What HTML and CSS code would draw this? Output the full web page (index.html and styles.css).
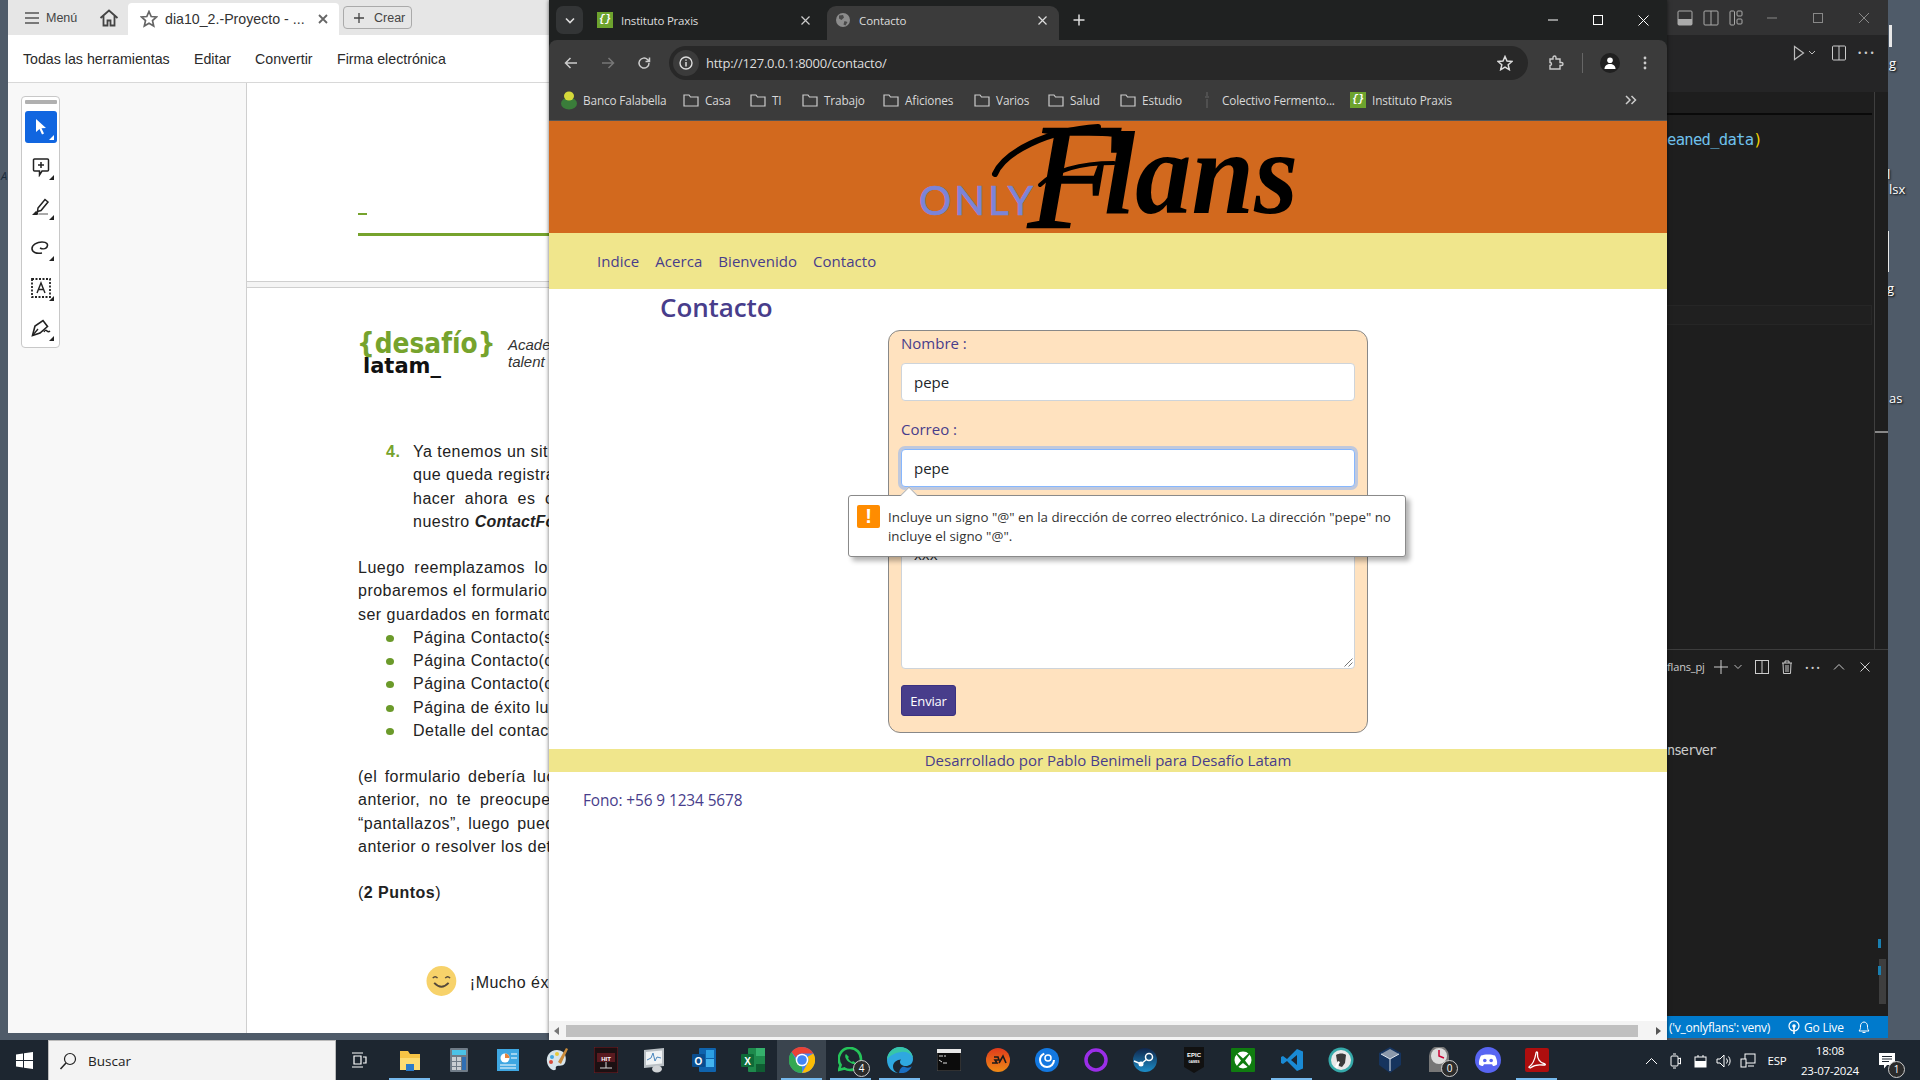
FILE: index.html
```html
<!DOCTYPE html>
<html lang="es">
<head>
<meta charset="utf-8">
<title>Contacto</title>
<link rel="stylesheet" href="styles.css">
</head>
<body>
<div class="screen">
  <div class="desktop">
    <span class="dlabel dl1">g</span>
    <span class="dlabel dl2">l</span>
    <span class="dlabel dl3">lsx</span>
    <span class="dlabel dl4">g</span>
    <span class="dlabel dl5">as</span>
    <span class="dlabel dl6">A</span>
    <i class="dbar dbar1"></i>
    <i class="dbar dbar2"></i>

    <!-- Acrobat window -->
    <section class="win acro">
      <div class="acro-tabs">
        <svg class="a-menu" width="16" height="14" viewBox="0 0 16 14"><path d="M1 2h14M1 7h14M1 12h14" stroke="#555" stroke-width="1.6"/></svg>
        <span class="a-menutxt">Menú</span>
        <svg class="a-home" width="20" height="18" viewBox="0 0 20 18"><path d="M1.5 9 10 1.5 18.500 9M4.500 7v9.500h4v-5h3v5h4V7" fill="none" stroke="#444" stroke-width="1.8"/></svg>
        <div class="a-tab">
          <svg width="18" height="18" viewBox="0 0 18 18"><path d="M9 1.500 11.200 6.500 16.500 7 12.500 10.600 13.700 16 9 13.200 4.300 16 5.500 10.600 1.500 7 6.800 6.500Z" fill="none" stroke="#666" stroke-width="1.700"/></svg>
          <span class="a-title">dia10_2.-Proyecto - ...</span>
          <svg width="10" height="10" viewBox="0 0 10 10"><path d="M1 1l8 8M9 1l-8 8" stroke="#666" stroke-width="1.800"/></svg>
        </div>
        <div class="a-crear">
          <svg width="12" height="12" viewBox="0 0 12 12"><path d="M6 1v10M1 6h10" stroke="#444" stroke-width="1.300"/></svg>
          <span>Crear</span>
        </div>
      </div>
      <div class="acro-menu">
        <span>Todas las herramientas</span><span>Editar</span><span>Convertir</span><span>Firma electrónica</span>
      </div>
      <div class="acro-body">
        <aside class="acro-side">
          <div class="palette">
            <i class="grip"></i>
            <div class="tool sel"><svg width="14" height="18" viewBox="0 0 14 18"><path d="M2 1v13l3.500-3 2.500 5.500 2-1-2.500-5.200 4.500-.3Z" fill="#fff"/></svg><b class="corner wh"></b></div>
            <div class="tool"><svg width="18" height="20" viewBox="0 0 18 20"><path d="M2.500 2h13a1 1 0 0 1 1 1v10a1 1 0 0 1-1 1H10l-2.500 4V14h-5a1 1 0 0 1-1-1V3a1 1 0 0 1 1-1Z" fill="none" stroke="#222" stroke-width="1.500"/><path d="M9 5v6M6 8h6" stroke="#222" stroke-width="1.500"/></svg><b class="corner"></b></div>
            <div class="tool"><svg width="20" height="20" viewBox="0 0 20 20"><path d="M7 11 14 2.500l3 2.500-7 8.500-3.500 1Z" fill="none" stroke="#222" stroke-width="1.500"/><path d="M1 18l4-4 2.500 1.800-1 2.200Z" fill="#222"/><path d="M8 16h9v2H7Z" fill="#aaa"/></svg><b class="corner"></b></div>
            <div class="tool"><svg width="20" height="14" viewBox="0 0 20 14"><path d="M11 12C5 13 1 11 1 7.500S6 1 11 1s6.500 2.500 5 5-5 2-7 1" fill="none" stroke="#222" stroke-width="1.600"/></svg><b class="corner"></b></div>
            <div class="tool"><svg width="20" height="20" viewBox="0 0 20 20"><rect x="1" y="1" width="18" height="18" fill="none" stroke="#222" stroke-width="1.800" stroke-dasharray="2 1.500"/><path d="M6 15 10 5l4 10M7.500 11.500h5" fill="none" stroke="#222" stroke-width="1.400"/></svg><b class="corner"></b></div>
            <div class="tool"><svg width="20" height="18" viewBox="0 0 20 18"><path d="M1.500 16.500 4 7l8-5.500 4.500 6L9 14Z" fill="none" stroke="#222" stroke-width="1.600"/><path d="M1.500 16.500 7 10" stroke="#222" stroke-width="1.300"/><path d="M13 13c1-2 2-2 3-1s2 1 3 0" fill="none" stroke="#222" stroke-width="1.500"/></svg><b class="corner"></b></div>
          </div>
        </aside>
        <div class="acro-doc">
          <div class="page page1"><i class="dash"></i><i class="rule"></i></div>
          <div class="page page2">
            <div class="doc-head">
              <div class="brand"><span class="brand-a">{desafío}</span><span class="brand-b">latam_</span></div>
              <div class="tagline"><span>Acade</span><span>talent</span></div>
            </div>
            <ol class="item">
              <li class="ln"><span class="num">4.</span>Ya tenemos un sit</li>
              <li class="ln">que queda registra</li>
              <li class="ln ws5">hacer ahora es c</li>
              <li class="ln">nuestro <b><i>ContactFo</i></b></li>
            </ol>
            <p class="para"><span class="ln ws5">Luego reemplazamos lo</span><span class="ln">probaremos el formulario</span><span class="ln">ser guardados en formato</span></p>
            <ul class="bul">
              <li class="ln">Página Contacto(s</li>
              <li class="ln">Página Contacto(c</li>
              <li class="ln">Página Contacto(c</li>
              <li class="ln">Página de éxito lue</li>
              <li class="ln">Detalle del contact</li>
            </ul>
            <p class="para"><span class="ln ws3">(el formulario debería luc</span><span class="ln ws4">anterior, no te preocupe</span><span class="ln ws3">“pantallazos”, luego pued</span><span class="ln">anterior o resolver los det</span></p>
            <p class="para"><span class="ln">(<b>2 Puntos</b>)</span></p>
            <div class="luck">
              <svg width="32" height="32" viewBox="0 0 32 32"><circle cx="16" cy="16" r="15.500" fill="#f7d26a"/><path d="M7 13q2.500-3 5 0M20 13q2.500-3 5 0" fill="none" stroke="#55493a" stroke-width="1.500"/><path d="M8.500 18q7.500 8 15 0" fill="none" stroke="#55493a" stroke-width="2"/></svg>
              <span>¡Mucho éx</span>
            </div>
          </div>
        </div>
      </div>
    </section>

    <!-- VS Code window -->
    <section class="win code">
      <div class="code-title">
        <svg width="16" height="16" viewBox="0 0 16 16"><rect x="1" y="1" width="14" height="14" rx="1" fill="none" stroke="#aaa"/><rect x="1" y="9" width="14" height="6" fill="#aaa"/></svg>
        <svg width="16" height="16" viewBox="0 0 16 16"><rect x="1" y="1" width="14" height="14" rx="1" fill="none" stroke="#aaa"/><path d="M8 1v14" stroke="#aaa"/></svg>
        <svg width="14" height="16" viewBox="0 0 14 16"><rect x="1" y="1" width="4.500" height="14" rx="1" fill="none" stroke="#aaa"/><rect x="8" y="1" width="5" height="5" rx="1" fill="none" stroke="#aaa"/><rect x="8" y="9" width="5" height="5" rx="1" fill="none" stroke="#aaa"/></svg>
        <span class="wbtn w1"><svg width="12" height="12" viewBox="0 0 12 12"><path d="M1 6h10" stroke="#888"/></svg></span>
        <span class="wbtn"><svg width="12" height="12" viewBox="0 0 12 12"><rect x="1.500" y="1.500" width="9" height="9" fill="none" stroke="#888"/></svg></span>
        <span class="wbtn"><svg width="12" height="12" viewBox="0 0 12 12"><path d="M1 1l10 10M11 1 1 11" stroke="#888"/></svg></span>
      </div>
      <div class="code-tool">
        <svg width="12" height="16" viewBox="0 0 12 16"><path d="M1.500 1.500v13l9-6.500Z" fill="none" stroke="#bbb" stroke-width="1.200"/></svg>
        <svg width="8" height="6" viewBox="0 0 8 6"><path d="M1 1l3 3 3-3" fill="none" stroke="#bbb"/></svg>
        <svg class="ct-split" width="14" height="16" viewBox="0 0 14 16"><rect x=".5" y="1" width="13" height="14" rx="1" fill="none" stroke="#ccc"/><path d="M7 1v14" stroke="#ccc"/></svg>
        <span class="ct-dots">···</span>
      </div>
      <div class="code-gap"></div>
      <div class="code-edit">
        <div class="edit-main">
          <i class="edit-shadow"></i>
          <div class="code-line"><span class="c-var">eaned_data</span><span class="c-par">)</span></div>
          <div class="edit-band"></div>
          <div class="edit-rest"></div>
        </div>
        <div class="edit-map"><i class="map-slider"></i></div>
      </div>
      <div class="term">
        <div class="term-head">
          <span class="term-name">flans_pj</span>
          <svg width="16" height="16" viewBox="0 0 16 16"><path d="M8 1v14M1 8h14" stroke="#ccc"/></svg>
          <svg width="8" height="6" viewBox="0 0 8 6"><path d="M.5 1l3.500 3.500L7.500 1" fill="none" stroke="#bbb"/></svg>
          <svg width="14" height="14" viewBox="0 0 14 14"><rect x=".5" y=".5" width="13" height="13" fill="none" stroke="#ccc"/><path d="M7 0v14" stroke="#ccc"/></svg>
          <svg width="12" height="14" viewBox="0 0 12 14"><path d="M1 3h10M4 3V1h4v2M2 3l.5 10.500h7L10 3M5 5v7M7 5v7" fill="none" stroke="#ccc"/></svg>
          <span class="th-dots">···</span>
          <svg width="12" height="8" viewBox="0 0 12 8"><path d="M1 6.500 6 1.500l5 5" fill="none" stroke="#ccc"/></svg>
          <svg width="10" height="10" viewBox="0 0 10 10"><path d="M.5.500l9 9M9.500.500l-9 9" stroke="#ccc"/></svg>
        </div>
        <div class="term-body">
          <div class="term-line">nserver</div>
          <i class="tb-mark m1"></i><i class="tb-thumb"></i><i class="tb-mark m2"></i>
        </div>
      </div>
      <div class="status">
        <span class="st-env">('v_onlyflans': venv)</span>
        <svg width="12" height="14" viewBox="0 0 12 14"><circle cx="6" cy="6" r="5" fill="none" stroke="#fff" stroke-width="1.200"/><circle cx="6" cy="6" r="1.800" fill="#fff"/><path d="M6 7v7" stroke="#fff" stroke-width="1.600"/></svg>
        <span class="st-live">Go Live</span>
        <svg class="st-bell" width="12" height="14" viewBox="0 0 12 14"><path d="M1 11h10c-1.500-1.500-1.500-3-1.500-5S8 2 6 2 2.500 4 2.500 6 2.500 9.500 1 11ZM4.500 12.500h3" fill="none" stroke="#fff"/></svg>
      </div>
    </section>

    <!-- Chrome window -->
    <section class="win chrome">
      <div class="strip">
        <div class="tablist"><svg width="10" height="7" viewBox="0 0 10 7"><path d="M1 1.500 5 5.500 9 1.500" fill="none" stroke="#ddd" stroke-width="1.600"/></svg></div>
        <div class="ctab">
          <span class="fav-praxis"><em>{}</em></span>
          <span class="ctab-t">Instituto Praxis</span>
          <svg width="9" height="9" viewBox="0 0 9 9"><path d="M.5.500l8 8M8.500.500l-8 8" stroke="#ccc" stroke-width="1.200"/></svg>
        </div>
        <div class="ctab active">
          <svg class="globe" width="14" height="14" viewBox="0 0 14 14"><circle cx="7" cy="7" r="7" fill="#8c8c8c"/><path d="M3 2.500 7 2 8 4.500 5.500 7 3 5.500ZM8.500 8l3 1-2 3.500-2-1Z" fill="#4a4a4a"/></svg>
          <span class="ctab-t">Contacto</span>
          <svg width="9" height="9" viewBox="0 0 9 9"><path d="M.5.500l8 8M8.500.500l-8 8" stroke="#ddd" stroke-width="1.200"/></svg>
        </div>
        <svg class="newtab" width="12" height="12" viewBox="0 0 12 12"><path d="M6 .500v11M.5 6h11" stroke="#ddd" stroke-width="1.500"/></svg>
        <div class="cwin">
          <svg width="10" height="10" viewBox="0 0 10 10"><path d="M0 5h10" stroke="#fff"/></svg>
          <svg width="10" height="10" viewBox="0 0 10 10"><rect x=".5" y=".5" width="9" height="9" fill="none" stroke="#fff"/></svg>
          <svg width="11" height="11" viewBox="0 0 11 11"><path d="M.5.500l10 10M10.500.500l-10 10" stroke="#fff"/></svg>
        </div>
      </div>
      <div class="ctool">
        <div class="navbtns">
          <svg width="14" height="12" viewBox="0 0 14 12"><path d="M13 6H2M6.500 1 1.500 6l5 5" fill="none" stroke="#ccc" stroke-width="1.500"/></svg>
          <svg width="14" height="12" viewBox="0 0 14 12"><path d="M1 6h11M7.500 1l5 5-5 5" fill="none" stroke="#777" stroke-width="1.500"/></svg>
          <svg width="14" height="14" viewBox="0 0 14 14"><path d="M12 7a5 5 0 1 1-1.500-3.500L12.500 5.500M12.500 1.500v4h-4" fill="none" stroke="#ccc" stroke-width="1.500"/></svg>
        </div>
        <div class="omni">
          <span class="omni-i"><svg width="14" height="14" viewBox="0 0 14 14"><circle cx="7" cy="7" r="6" fill="none" stroke="#ddd" stroke-width="1.400"/><path d="M7 6v4.500M7 3.500v1.300" stroke="#ddd" stroke-width="1.500"/></svg></span>
          <span class="omni-u">http://127.0.0.1:8000/contacto/</span>
          <svg class="omni-s" width="16" height="16" viewBox="0 0 16 16"><path d="M8 1.500 10 6 15 6.500 11.200 9.800 12.300 14.700 8 12.200 3.700 14.700 4.800 9.800 1 6.500 6 6Z" fill="none" stroke="#ddd" stroke-width="1.500"/></svg>
        </div>
        <div class="ctool-r">
          <svg width="16" height="16" viewBox="0 0 16 16"><path d="M2 4h3V2.500a1.500 1.500 0 0 1 3 0V4h4v3.500h1.500a1.500 1.500 0 0 1 0 3H12V14H2v-3.500a1.500 1.500 0 0 0 0-3Z" fill="none" stroke="#ccc" stroke-width="1.400"/></svg>
          <i class="csep"></i>
          <span class="avatar"><svg width="12" height="12" viewBox="0 0 12 12"><circle cx="6" cy="3.300" r="2.800" fill="#fff"/><path d="M.5 12c0-3.500 2.500-5 5.500-5s5.500 1.500 5.500 5Z" fill="#fff"/></svg></span>
          <svg width="4" height="14" viewBox="0 0 4 14"><circle cx="2" cy="2" r="1.400" fill="#ccc"/><circle cx="2" cy="7" r="1.400" fill="#ccc"/><circle cx="2" cy="12" r="1.400" fill="#ccc"/></svg>
        </div>
      </div>
      <div class="bmarks">
        <span class="bm"><svg width="16" height="20" viewBox="0 0 16 20"><ellipse cx="8" cy="13.500" rx="8" ry="6" fill="#3a7d3a"/><ellipse cx="8" cy="6" rx="5" ry="4.500" fill="#d4d83a"/></svg>Banco Falabella</span>
        <span class="bm"><svg class="fold" viewBox="0 0 16 14"><path d="M1 2h5l1.500 2H15v9H1Z"/></svg>Casa</span>
        <span class="bm"><svg class="fold" viewBox="0 0 16 14"><path d="M1 2h5l1.500 2H15v9H1Z"/></svg>TI</span>
        <span class="bm"><svg class="fold" viewBox="0 0 16 14"><path d="M1 2h5l1.500 2H15v9H1Z"/></svg>Trabajo</span>
        <span class="bm"><svg class="fold" viewBox="0 0 16 14"><path d="M1 2h5l1.500 2H15v9H1Z"/></svg>Aficiones</span>
        <span class="bm"><svg class="fold" viewBox="0 0 16 14"><path d="M1 2h5l1.500 2H15v9H1Z"/></svg>Varios</span>
        <span class="bm"><svg class="fold" viewBox="0 0 16 14"><path d="M1 2h5l1.500 2H15v9H1Z"/></svg>Salud</span>
        <span class="bm"><svg class="fold" viewBox="0 0 16 14"><path d="M1 2h5l1.500 2H15v9H1Z"/></svg>Estudio</span>
        <span class="bm bm-col"><svg width="6" height="18" viewBox="0 0 6 18"><path d="M3 1v4M1 6h4M2 9h2M3 10v7" stroke="#666" stroke-width="1"/></svg>Colectivo Fermento...</span>
        <span class="bm"><span class="fav-praxis"><em>{}</em></span>Instituto Praxis</span>
        <svg class="bm-more" width="12" height="10" viewBox="0 0 12 10"><path d="M1 1l4 4-4 4M6.500 1l4 4-4 4" fill="none" stroke="#ccc" stroke-width="1.500"/></svg>
      </div>
      <div class="site">
        <header class="s-head">
          <svg width="400" height="112" viewBox="0 0 400 112" role="img" aria-label="Only Flans">
            <text class="l-only" x="11" y="94" textLength="117" lengthAdjust="spacingAndGlyphs">ONLY</text>
            <path class="l-swash" d="M87 53C96 32 138 9 190 6"/>
            <path class="l-swash2" d="M132 64C150 46 180 42 206 42"/>
            <text class="l-f" x="120" y="106">F</text>
            <text class="l-ans" x="196" y="92" textLength="194" lengthAdjust="spacingAndGlyphs">lans</text>
          </svg>
        </header>
        <nav class="s-nav"><a>Indice</a><a>Acerca</a><a>Bienvenido</a><a>Contacto</a></nav>
        <main class="s-main">
          <h2>Contacto</h2>
          <form class="card">
            <label>Nombre :</label>
            <div class="inp">pepe</div>
            <label>Correo :</label>
            <div class="inp focus">pepe</div>
            <label class="hid"></label>
            <div class="area">xxx
              <svg class="grabber" width="10" height="10" viewBox="0 0 10 10"><path d="M9.500 1.500 1.500 9.500M9.500 5.500l-4 4" stroke="#777"/></svg>
            </div>
            <button type="button" class="send">Enviar</button>
          </form>
          <div class="bubble">
            <i class="arrow"></i>
            <span class="warn">!</span>
            <p>Incluye un signo "@" en la dirección de correo electrónico. La dirección "pepe" no incluye el signo "@".</p>
          </div>
        </main>
        <footer class="s-foot">Desarrollado por Pablo Benimeli para Desafío Latam</footer>
        <div class="s-fono">Fono: +56 9 1234 5678</div>
      </div>
      <div class="hbar">
        <svg width="6" height="8" viewBox="0 0 6 8"><path d="M5 0v8L0 4Z" fill="#777"/></svg>
        <i class="hthumb"></i>
        <svg class="harrow" width="6" height="8" viewBox="0 0 6 8"><path d="M1 0v8l5-4Z" fill="#555"/></svg>
      </div>
    </section>
  </div>

  <!-- Taskbar -->
  <footer class="taskbar">
    <div class="t-start"><svg width="17" height="17" viewBox="0 0 17 17"><path d="M0 2.500 7 1.500v6.500H0ZM8 1.300 17 0v8H8ZM0 9h7v6.500L0 14.500ZM8 9h9v8L8 15.700Z" fill="#fff"/></svg></div>
    <div class="t-search">
      <svg width="18" height="18" viewBox="0 0 18 18"><circle cx="11" cy="7" r="5.500" fill="none" stroke="#222" stroke-width="1.200"/><path d="M7 11 1.500 17" stroke="#222" stroke-width="1.500"/></svg>
      <span>Buscar</span>
    </div>
    <div class="t-view"><svg width="16" height="16" viewBox="0 0 16 16"><path d="M1 1h11M1 15h11M3 4h7v8H3ZM12 5h3v6h-3" fill="none" stroke="#fff" stroke-width="1.200"/></svg></div>
    <div class="t-item on"><svg width="24" height="24" viewBox="0 0 24 24"><path d="M2 3h8l2 3h10v16H2Z" fill="#f6c445"/><path d="M2 10h20v12H2Z" fill="#fcdc72"/><path d="M8 23v-7h8v7Z" fill="#2b7bc9"/></svg></div>
    <div class="t-item"><svg width="18" height="24" viewBox="0 0 18 24"><rect width="18" height="24" rx="1" fill="#6f7b87"/><rect x="2" y="2" width="14" height="5" fill="#4bc3e8"/><path d="M2 9h4v4H2ZM7 9h4v4H7ZM2 14h4v4H2ZM7 14h4v4H7ZM2 19h4v3H2ZM7 19h4v3H7Z" fill="#c9ced3"/><path d="M12 9h4v13h-4Z" fill="#2f6fb5"/></svg></div>
    <div class="t-item"><svg width="22" height="22" viewBox="0 0 22 22"><rect width="22" height="22" fill="#3fa7e2"/><circle cx="8" cy="9" r="4.500" fill="#fff"/><path d="M8 9V4.500a4.500 4.500 0 0 1 4.500 4.500Z" fill="#e8843a"/><path d="M14 5h6M14 9h6M3 16h16M3 19h16" stroke="#fff"/></svg></div>
    <div class="t-item"><svg width="24" height="26" viewBox="0 0 24 26"><path d="M12 3C5 3 1 9 2 15c.8 5 5 9 8 8 2-.7-.5-3 2-4s6 1 8-3 1-13-8-13Z" fill="#d8e4ea"/><circle cx="7" cy="10" r="2" fill="#3fa7e2"/><circle cx="12" cy="7" r="2" fill="#e8c93a"/><circle cx="6" cy="15" r="2" fill="#d84a3a"/><path d="M13 15 21 1l2 1-7 15Z" fill="#c98a3a"/></svg></div>
    <div class="t-item"><svg width="24" height="26" viewBox="0 0 24 26"><rect width="24" height="26" rx="1" fill="#1c1012" stroke="#7a1d25"/><rect x="3" y="6" width="18" height="9" fill="#5a1a20"/><text x="12" y="13.500" class="mini">HIT</text><path d="M12 15v6M6 21h12" stroke="#d8d8d8" stroke-width="1"/></svg></div>
    <div class="t-item"><svg width="24" height="26" viewBox="0 0 24 26"><path d="M1 3 21 1v18L1 21Z" fill="#b9bfc4"/><path d="M3 5 19 3.500v13L3 18Z" fill="#f0f3f5"/><path d="M4 13 8 11l2-5 2 8 2-4 4 1" fill="none" stroke="#4a86bd"/><ellipse cx="14" cy="22" rx="5" ry="3.500" fill="#d0d3d6"/></svg></div>
    <div class="t-item"><svg width="24" height="24" viewBox="0 0 24 24"><rect x="7" y="0" width="17" height="24" rx="1" fill="#0f63ad"/><rect x="14" y="2" width="8" height="8" fill="#2c9fe2"/><rect x="14" y="11" width="8" height="8" fill="#43b4ef"/><rect x="0" y="6" width="13" height="13" rx="1" fill="#0a4d8e"/><text x="6.500" y="16.500" class="mini big">O</text></svg></div>
    <div class="t-item"><svg width="24" height="24" viewBox="0 0 24 24"><rect x="7" y="0" width="17" height="24" rx="1" fill="#1e8a4c"/><rect x="15" y="0" width="9" height="8" fill="#35b06c"/><rect x="15" y="16" width="9" height="8" fill="#0f5d32"/><rect x="0" y="6" width="13" height="13" rx="1" fill="#0f6a38"/><text x="6.500" y="16.500" class="mini big">X</text></svg></div>
    <div class="t-item sel on"><svg width="26" height="26" viewBox="0 0 26 26"><circle cx="13" cy="13" r="13" fill="#4285f4"/><path d="M13 0a13 13 0 0 1 11.300 6.500H13a6.500 6.500 0 0 0-6 4L2.500 5A13 13 0 0 1 13 0Z" fill="#ea4335"/><path d="M24.300 6.500A13 13 0 0 1 13 26l5.600-9.700a6.500 6.500 0 0 0 0-6.500Z" fill="#fbbc05"/><path d="M13 26A13 13 0 0 1 2.500 5L8 14.500a6.500 6.500 0 0 0 5 5Z" fill="#34a853"/><circle cx="13" cy="13" r="6.300" fill="#fff"/><circle cx="13" cy="13" r="4.800" fill="#4285f4"/></svg></div>
    <div class="t-item on"><svg width="26" height="26" viewBox="0 0 26 26"><path d="M12 1a11 11 0 0 1 11 11c0 6-5 11-11 11-2 0-4-.6-5.500-1.500L1 23l1.600-5A11 11 0 0 1 12 1Z" fill="none" stroke="#25c45a" stroke-width="2.600"/><path d="M8 7c-2 2 0 6 3 8s6 3 7 1l-3-2-1 1c-2-.8-3-2-4-4l1-1Z" fill="#25c45a"/></svg><b class="t-badge">4</b></div>
    <div class="t-item on"><svg width="26" height="26" viewBox="0 0 26 26"><path d="M13 0c7 0 13 5 13 12 0 5-4 7-7 7-4 0-6-2-6-4 0-1 .5-2 1-2.500-4 0-8 3-8 7 0 3 2 6 6 6.500C5 26 0 20 0 13 0 6 6 0 13 0Z" fill="#2fa8e0"/><path d="M0 13C0 6 6 0 13 0c7 0 13 5 13 12-1-5-6-8-12-7-7 1-12 4-14 8Z" fill="#37c6a8"/><path d="M12 26c6 1 11-2 13-7-2 2-5 2-7 1s-5 0-6 6Z" fill="#1a6ec2"/></svg></div>
    <div class="t-item"><svg width="24" height="22" viewBox="0 0 24 22"><rect width="24" height="22" fill="#0c0c0c" stroke="#555"/><rect width="24" height="4" fill="#e8e8e8"/><path d="M2 7h4M7 7h2M2 11l3 2M6 14h4" stroke="#ddd"/></svg></div>
    <div class="t-item"><svg width="24" height="26" viewBox="0 0 24 26"><defs><linearGradient id="eag" x1="0" y1="0" x2="0" y2="1"><stop offset="0" stop-color="#e03a1c"/><stop offset="1" stop-color="#ee8a16"/></linearGradient></defs><circle cx="12" cy="13" r="12" fill="url(#eag)"/><path d="M6 16h5l-2-3h4l-1-3H8M13 16l4-7 3 7" fill="none" stroke="#1a1a1a" stroke-width="1.600"/></svg></div>
    <div class="t-item"><svg width="24" height="26" viewBox="0 0 24 26"><circle cx="12" cy="13" r="12" fill="#1378e0"/><circle cx="12" cy="13" r="7" fill="none" stroke="#fff" stroke-width="2" stroke-dasharray="30 14"/><circle cx="13" cy="11" r="3" fill="none" stroke="#fff" stroke-width="1.500"/></svg></div>
    <div class="t-item"><svg width="24" height="24" viewBox="0 0 24 24"><circle cx="12" cy="12" r="10" fill="none" stroke="#9b2ee8" stroke-width="3.500"/></svg></div>
    <div class="t-item"><svg width="24" height="26" viewBox="0 0 24 26"><defs><linearGradient id="stg" x1="0" y1="0" x2="0" y2="1"><stop offset="0" stop-color="#10254a"/><stop offset="1" stop-color="#1c8ec9"/></linearGradient></defs><circle cx="12" cy="13" r="12" fill="url(#stg)"/><circle cx="16" cy="10" r="3.500" fill="none" stroke="#fff" stroke-width="1.500"/><circle cx="8" cy="17" r="2.500" fill="#fff"/><path d="M1 14l7 3 6-5" stroke="#fff" stroke-width="1.500" fill="none"/></svg></div>
    <div class="t-item"><svg width="20" height="26" viewBox="0 0 20 26"><path d="M0 0h20v20L10 26 0 20Z" fill="#111"/><text x="10" y="10" class="mini">EPIC</text><text x="10" y="16" class="mini tiny">GAMES</text></svg></div>
    <div class="t-item"><svg width="24" height="24" viewBox="0 0 24 24"><rect width="24" height="24" rx="1" fill="#107c10"/><circle cx="12" cy="12" r="8.500" fill="#fff"/><path d="M6 5l6 5.500L18 5l1 1-5 6.500 5 6.500-1 1-6-5-6 5-1-1 5-6.500L5 6Z" fill="#107c10"/></svg></div>
    <div class="t-item on"><svg width="24" height="24" viewBox="0 0 24 24"><path d="M17 1 7 11 3 8 1 9v6l2 1 4-3 10 10 6-2.500V3.500ZM17 7v10l-6-5Z" fill="#1a8ad4"/></svg></div>
    <div class="t-item"><svg width="26" height="26" viewBox="0 0 26 26"><circle cx="13" cy="13" r="12.500" fill="#35a9a9"/><circle cx="13" cy="13" r="10" fill="#e8e8e8"/><path d="M8 8c3-2 8-2 10 0l-1 8-3 4-3-1-2-5Z" fill="#3a3a3a"/><path d="M7 20l3-6 2 1-3 6Z" fill="#fff"/></svg></div>
    <div class="t-item"><svg width="22" height="26" viewBox="0 0 22 26"><path d="M11 0 22 6v12L11 26 0 18V6Z" fill="#16345e"/><path d="M11 2l9 5-9 5-9-5Z" fill="#8c99ab"/><path d="M11 12v12M11 12 2 7M11 12l9-5" stroke="#dfe6ef"/></svg></div>
    <div class="t-item"><svg width="24" height="26" viewBox="0 0 24 26"><path d="M2 25V9a10 10 0 0 1 20 0v16Z" fill="#777"/><circle cx="12" cy="9" r="8" fill="#ddd"/><path d="M12 3v6l5 2" fill="none" stroke="#c03" stroke-width="1.500"/></svg><b class="t-badge">0</b></div>
    <div class="t-item"><svg width="26" height="26" viewBox="0 0 26 26"><circle cx="13" cy="13" r="13" fill="#5865f2"/><path d="M6 8.500C9 7 17 7 20 8.500c1.500 3 2.500 6 2 9-1.500 1-3 1.500-4 1.500l-1-1.700H9L8 19c-1 0-2.500-.5-4-1.500-.500-3 .5-6 2-9Z" fill="#fff"/><circle cx="9.800" cy="13.500" r="1.800" fill="#5865f2"/><circle cx="16.200" cy="13.500" r="1.800" fill="#5865f2"/></svg></div>
    <div class="t-item on"><svg width="24" height="24" viewBox="0 0 24 24"><rect width="24" height="24" rx="2" fill="#ae0e0e"/><path d="M4 19c3-2 6-8 7-14 .5-2 2-1 1.500 1-.5 4 2 9 7.500 10 1 .5 0 1.500-2 1-4-.5-9 0-12 2.500-1 .8-2.500 0-2-.5Z" fill="none" stroke="#fff" stroke-width="1.300"/></svg></div>
    <div class="t-tray">
      <svg width="13" height="8" viewBox="0 0 13 8"><path d="M1 7 6.500 1.500 12 7" fill="none" stroke="#fff"/></svg>
      <svg width="11" height="16" viewBox="0 0 11 16"><rect x="1" y="3" width="7" height="10" rx="1" fill="none" stroke="#fff"/><path d="M8 6l2.500-1v6L8 10M3 1h3M3 15h3" fill="none" stroke="#fff"/></svg>
      <svg width="15" height="14" viewBox="0 0 15 14"><rect x="2" y="3" width="11" height="10" fill="none" stroke="#fff"/><rect x="2" y="7" width="11" height="6" fill="#fff"/><path d="M5 3V1M10 3V1" stroke="#fff"/></svg>
      <svg width="15" height="14" viewBox="0 0 15 14"><path d="M1 5h3l4-4v12L4 9H1ZM10.500 4.500a4 4 0 0 1 0 5M12.500 2.500a7 7 0 0 1 0 9" fill="none" stroke="#fff"/></svg>
      <svg width="16" height="16" viewBox="0 0 16 16"><rect x="5" y="1" width="10" height="9" fill="none" stroke="#fff"/><rect x="1" y="6" width="5" height="8" fill="#1d2630" stroke="#fff"/><path d="M8 13h6" stroke="#fff"/></svg>
      <span class="t-lang">ESP</span>
      <div class="t-clock"><span>18:08</span><span>23-07-2024</span></div>
      <div class="t-note"><svg width="16" height="16" viewBox="0 0 16 16"><path d="M0 0h16v12H8l-3 3.500V12H0Z" fill="#fff"/><path d="M3 3.500h10M3 6h10M3 8.500h7" stroke="#1d2630"/></svg><b class="t-badge small">1</b></div>
    </div>
  </footer>
</div>
</body>
</html>
```

FILE: styles.css
```css
* { box-sizing: border-box; }
html, body { margin: 0; padding: 0; overflow: hidden; }
body { width: 1920px; height: 1080px; font-family: "Open Sans", sans-serif; }
.screen { width: 1920px; height: 1080px; display: flex; flex-direction: column; background: #4f5b69; }
.desktop { position: relative; flex: 1; height: 1040px; overflow: hidden; }
.dlabel { position: absolute; left: 1889px; color: #fff; font: 13px/16px "Open Sans", sans-serif; text-shadow: 1px 1px 2px #000; }
.dl1 { top: 55px; } .dl2 { top: 166px; left: 1887px; } .dl3 { top: 181px; } .dl4 { top: 280px; left: 1887px; } .dl5 { top: 390px; }
.dl6 { top: 168px; left: 1px; font-size: 11px; color: #1a2b3c; font-style: italic; text-shadow: none; }
.dbar { position: absolute; background: #e8e8e8; }
.dbar1 { left: 1889px; top: 25px; width: 3px; height: 22px; }
.dbar2 { left: 1888px; top: 231px; width: 1px; height: 41px; }
.win { position: absolute; overflow: hidden; }

/* Acrobat */
.acro { left: 8px; top: 0; width: 541px; height: 1033px; background: #fff; display: flex; flex-direction: column; font-family: "Liberation Sans", Arial, sans-serif; }
.acro-tabs { height: 35px; background: #e6e6e6; display: flex; align-items: center; flex: none; position: relative; }
.a-menu { margin-left: 16px; flex: none; }
.a-menutxt { margin-left: 6px; font-size: 12.500px; color: #444; width: 53px; flex: none; }
.a-home { flex: none; }
.a-tab { margin-left: 9px; align-self: flex-end; width: 211px; height: 32px; flex: none; background: #fff; border-radius: 4px 4px 0 0; display: flex; align-items: center; padding: 0 11px 0 12px; color: #333; font-size: 14.200px; }
.a-title { margin-left: 7px; flex: 1; white-space: nowrap; }
.a-crear { margin-left: 4px; width: 69px; height: 23px; flex: none; border: 1px solid #aaa; border-radius: 4px; display: flex; align-items: center; padding-left: 9px; gap: 9px; font-size: 12.500px; color: #444; }
.acro-menu { height: 48px; flex: none; border-bottom: 1px solid #d8d8d8; display: grid; grid-template-columns: 171px 61px 82px auto; align-items: center; padding: 0 0 0 15px; font-size: 14.200px; color: #2a2a2a; }
.acro-body { flex: 1; display: flex; min-height: 0; }
.acro-side { width: 239px; flex: none; background: #f8f8f8; border-right: 1px solid #cfcfcf; padding: 13px 0 0 13px; }
.palette { width: 39px; height: 252px; background: #fff; border: 1px solid #c8c8c8; border-radius: 4px; padding: 3px 2px 0; display: flex; flex-direction: column; align-items: center; }
.grip { width: 32px; height: 4px; background: #b0b0b0; border-radius: 1px; margin-bottom: 7px; flex: none; }
.tool { position: relative; width: 32px; height: 32px; flex: none; margin-bottom: 8.200px; display: flex; align-items: center; justify-content: center; border-radius: 3px; }
.tool.sel { background: #1166e0; }
.corner { position: absolute; right: 3px; bottom: 3px; border-left: 5px solid transparent; border-bottom: 5px solid #222; }
.corner.wh { border-bottom-color: #fff; }
.acro-doc { flex: 1; min-width: 0; background: #f4f4f4; overflow: hidden; color: #222; }
.page { background: #fff; position: relative; }
.page1 { height: 199px; border-bottom: 1px solid #cfcfcf; margin-bottom: 5px; padding: 130px 0 0 111px; }
.dash { display: block; width: 9px; height: 2px; background: #76a32d; }
.rule { display: block; height: 3px; margin-top: 18px; background: #76a32d; }
.page2 { border-top: 1px solid #cfcfcf; height: 760px; padding: 40px 0 0 111px; }
.doc-head { display: flex; height: 112px; }
.brand { display: flex; flex-direction: column; width: 151px; margin-left: -1px; }
.brand-a { font: bold 29px/30px "DejaVu Sans", sans-serif; color: #76a32d; white-space: nowrap; transform: scaleX(.86); transform-origin: left; }
.brand-b { font: bold 21px/17px "DejaVu Sans", sans-serif; color: #111; margin-left: 6px; }
.tagline { display: flex; flex-direction: column; font: italic 15px/17px "Liberation Sans", sans-serif; color: #333; padding-top: 8px; white-space: nowrap; }
.item, .bul, .para { margin: 0; padding: 0; list-style: none; }
.ln { display: block; height: 23.250px; line-height: 23px; font-size: 16px; letter-spacing: .48px; white-space: nowrap; }
.ln b i { letter-spacing: .2px; }
.item .ln { padding-left: 55px; position: relative; }
.num { position: absolute; left: 28px; font-weight: bold; color: #76a32d; }
.ws3 { word-spacing: 2.500px; }
.ws4 { word-spacing: 4px; }
.ws5 { word-spacing: 4.500px; }
.para { margin-top: 23px; }
.bul li { padding-left: 55px; position: relative; }
.bul li::before { content: ""; position: absolute; left: 28px; top: 9px; width: 8px; height: 7px; border-radius: 50%; background: #6b9a2a; }
.luck { margin-top: 61px; margin-left: 68px; display: flex; align-items: center; gap: 13px; font-size: 16px; letter-spacing: .5px; white-space: nowrap; }
.luck span { padding-top: 4px; }

/* VS Code */
.code { left: 1667px; top: 0; width: 221px; height: 1038px; background: #1e1e1e; display: flex; flex-direction: column; color: #ccc; }
.code-title { height: 35px; background: #323233; display: flex; align-items: center; padding-left: 10px; gap: 10px; flex: none; }
.code-title svg { flex: none; }
.wbtn { width: 36px; flex: none; display: flex; justify-content: center; }
.w1 { margin-left: 1px; }
.code-tool { height: 35px; background: #252526; flex: none; display: flex; align-items: center; padding-left: 126px; gap: 3px; }
.ct-split { margin-left: 13px; }
.ct-dots { margin-left: 8px; font-size: 20px; line-height: 10px; letter-spacing: 1px; color: #ccc; }
.code-gap { height: 22px; background: #252526; flex: none; }
.code-edit { height: 557px; flex: none; display: flex; }
.edit-main { width: 207px; position: relative; }
.edit-shadow { display: block; height: 2px; margin-top: 21px; background: #0a0a0a; width: 205px; }
.code-line { margin-top: 14px; font: 15.500px/22px "DejaVu Sans Mono", monospace; letter-spacing: -.7px; white-space: nowrap; }
.c-var { color: #6fc1ec; } .c-par { color: #f0d000; }
.edit-band { margin-top: 154px; height: 20px; border: 1px solid #262626; border-left: 0; background: #202020; width: 205px; }
.edit-map { position: relative; flex: 1; border-left: 1px solid #3f3f3f; }
.map-slider { position: absolute; top: 339px; left: 0; right: 0; height: 2px; background: #888; }
.term { flex: 1; border-top: 1px solid #3d3d3d; display: flex; flex-direction: column; min-height: 0; }
.term-head { height: 34px; display: grid; grid-template-columns: 46px 16px 18px 30px 20px 32px 20px 32px; align-items: center; justify-items: center; flex: none; }
.term-name { font: 11px/14px "Open Sans", sans-serif; color: #ccc; justify-self: start; letter-spacing: -.15px; }
.th-dots { color: #ccc; letter-spacing: 1px; font-size: 18px; line-height: 10px; }
.term-body { position: relative; flex: 1; }
.term-line { margin-top: 57px; font: 13.500px/18px "DejaVu Sans Mono", monospace; letter-spacing: -1.200px; color: #ccc; }
.tb-thumb { position: absolute; left: 212px; top: 275px; width: 7px; height: 45px; background: #3e3e3e; }
.tb-mark { position: absolute; left: 211px; width: 3px; height: 9px; background: #1a7fb0; z-index: 1; }
.m1 { top: 255px; } .m2 { top: 282px; }
.status { height: 22px; background: #007acc; color: #fff; display: flex; align-items: center; flex: none; padding-left: 2px; font: 12px "Open Sans", sans-serif; white-space: nowrap; }
.st-env { width: 119px; letter-spacing: -.25px; }
.st-live { margin-left: 4px; width: 54px; letter-spacing: -.2px; }

/* Chrome */
.chrome { left: 549px; top: 0; width: 1118px; height: 1040px; background: #1f2121; display: flex; flex-direction: column; box-shadow: 0 0 4px rgba(0,0,0,.6); font-family: "Open Sans", sans-serif; }
.strip { height: 40px; background: #1f2121; display: flex; align-items: flex-end; flex: none; position: relative; color: #ddd; padding-left: 7px; }
.tablist { width: 27px; height: 28px; margin-bottom: 6px; background: #333536; border-radius: 7px; display: flex; align-items: center; justify-content: center; flex: none; }
.ctab { height: 34px; width: 244px; display: flex; align-items: center; padding: 0 0 6px 14px; flex: none; }
.ctab .ctab-t { margin-left: 8px; font-size: 11.500px; flex: 1; letter-spacing: -.2px; }
.ctab.active .ctab-t { margin-left: 9px; letter-spacing: -.1px; }
.ctab svg:last-child { margin-right: 17px; }
.ctab.active { width: 232px; background: #3b3b3b; border-radius: 9px 9px 0 0; padding-left: 9px; }
.ctab.active svg:last-child { margin-right: 12px; }
.fav-praxis { width: 16px; height: 16px; background: #6da32e; display: inline-flex; align-items: center; justify-content: center; flex: none; }
.fav-praxis em { font: italic bold 10px/1 "Liberation Mono", monospace; color: #fff; }
.newtab { margin: 0 0 14px 14px; flex: none; }
.cwin { position: absolute; right: 0; top: 0; height: 40px; display: flex; align-items: center; }
.cwin svg { margin-right: 35px; }
.cwin svg:last-child { margin-right: 18px; }
.ctool { height: 42px; background: #3b3b3b; flex: none; display: flex; align-items: center; border-top-left-radius: 8px; border-top-right-radius: 8px; padding-top: 4px; }
.navbtns { width: 120px; display: grid; grid-template-columns: 37px 36px 20px; padding-left: 15px; align-items: center; flex: none; }
.omni { width: 859px; height: 34px; background: #282828; border-radius: 17px; display: flex; align-items: center; padding-left: 4px; color: #ddd; flex: none; }
.omni-i { width: 26px; height: 26px; background: #3b3b3b; border-radius: 50%; display: flex; align-items: center; justify-content: center; }
.omni-u { margin-left: 7px; font-size: 13px; flex: 1; letter-spacing: -.25px; }
.omni-s { margin-right: 15px; }
.ctool-r { display: flex; align-items: center; padding-left: 20px; }
.csep { width: 1px; height: 20px; background: #666; margin: 0 17px 0 18px; }
.avatar { width: 20px; height: 20px; border-radius: 50%; background: #202020; display: flex; align-items: center; justify-content: center; margin-right: 23px; }
.bmarks { height: 39px; background: #3b3b3b; border-bottom: 1px solid #555; flex: none; display: grid; grid-template-columns: 122px 67px 52px 81px 91px 74px 72px 87px 143px 275px auto; align-items: center; padding: 0 0 3px 12px; font-size: 11.800px; color: #d8d8d8; letter-spacing: -.15px; }
.bm { display: flex; align-items: center; gap: 6px; white-space: nowrap; }
.bm-col { gap: 12px; margin-left: -3px; }
.fold { width: 16px; height: 14px; fill: none; stroke: #ccc; stroke-width: 1.200; flex: none; }

.site { flex: 1; min-height: 0; background: #fff; display: flex; flex-direction: column; color: #483d8b; }
.s-head { height: 112px; background: #d2691e; flex: none; display: flex; justify-content: center; }
.l-only { font: 400 41px "Lato", sans-serif; fill: #7b84d8; stroke: #7b84d8; stroke-width: .7; letter-spacing: 3px; }
.l-f { font: italic 400 150px "Liberation Serif", serif; fill: #000; stroke: #000; stroke-width: 1.500; }
.l-ans { font: italic 700 118px "Liberation Serif", serif; fill: #000; }
.l-swash { fill: none; stroke: #000; stroke-width: 6; stroke-linecap: round; }
.l-swash2 { fill: none; stroke: #000; stroke-width: 4; stroke-linecap: round; }
.s-nav { height: 56px; background: #f0e68c; flex: none; display: flex; align-items: center; padding-left: 48px; gap: 16px; font-size: 15px; letter-spacing: .05px; color: #483d8b; }
.s-main { position: relative; height: 460px; flex: none; padding-left: 339px; }
.s-main h2 { position: absolute; left: 111px; top: 0; margin: 0; font: 600 26px/36px "Open Sans", sans-serif; letter-spacing: -.1px; }
.card { position: absolute; left: 339px; top: 41px; width: 480px; height: 403px; background: #ffe2bf; border: 1px solid #888; border-radius: 12px; padding: 0 12px; display: flex; flex-direction: column; font-size: 15px; }
.card label { height: 24px; line-height: 24px; margin-bottom: 8px; flex: none; }
.inp { height: 38px; flex: none; margin-bottom: 16px; background: #fff; border: 1px solid #ced4da; border-radius: 4px; padding: 0 12px; line-height: 36px; color: #212529; }
.inp.focus { border-color: #86b7fe; box-shadow: 0 0 0 3px #c0c8dc; }
.area { position: relative; height: 134px; flex: none; margin-bottom: 16px; background: #fff; border: 1px solid #ced4da; border-radius: 4px; padding: 8px 12px; color: #212529; }
.grabber { position: absolute; right: 1px; bottom: 1px; }
.send { width: 55px; height: 31px; padding: 0; background: #483d8b; color: #fff; border: 1px solid #3a3180; border-radius: 3px; font: 13px "Open Sans", sans-serif; letter-spacing: -.2px; }
.bubble { position: absolute; left: 299px; top: 206px; width: 558px; height: 62px; background: #fff; border: 1px solid #8a8a8a; border-radius: 3px; box-shadow: 4px 4px 5px rgba(0,0,0,.3); display: flex; padding: 9px 8px 0 8px; gap: 8px; color: #333; z-index: 2; }
.arrow { position: absolute; left: 54px; top: -7px; width: 12px; height: 12px; background: #fff; border-left: 1px solid #b5b5b5; border-top: 1px solid #b5b5b5; transform: rotate(45deg); }
.warn { width: 23px; height: 23px; flex: none; background: #ff8c00; border-radius: 2px; color: #fff; font: bold 20px/23px "Liberation Sans", sans-serif; text-align: center; }
.bubble p { margin: 3px 0 0; font-size: 13.350px; line-height: 19px; }
.s-foot { height: 23px; background: #f0e68c; flex: none; text-align: center; font-size: 15px; line-height: 23px; }
.s-fono { margin: 18px 0 0 34px; font-size: 15.400px; line-height: 22px; letter-spacing: -.1px; }
.hbar { height: 19px; flex: none; background: #f4f4f4; display: flex; align-items: center; padding: 0 6px 0 5px; gap: 6px; }
.hthumb { flex: none; width: 1072px; height: 12px; background: #c0c0c0; }
.harrow { margin-left: 11px; }

/* Taskbar */
.taskbar { height: 40px; flex: none; background: #1d2630; display: flex; align-items: stretch; color: #fff; }
.t-start { width: 48px; display: flex; align-items: center; justify-content: center; flex: none; }
.t-search { width: 288px; flex: none; background: #f3f3f3; border: 1px solid #bbb; border-bottom: 0; display: flex; align-items: center; padding-left: 10px; gap: 11px; color: #222; font-size: 13.500px; }
.t-view { width: 49px; display: flex; align-items: center; justify-content: center; flex: none; padding-right: 3px; }
.t-item { width: 49px; flex: none; position: relative; display: flex; align-items: center; justify-content: center; }
.t-item.sel { background: #3a444e; }
.t-item.on::after { content: ""; position: absolute; left: 4px; right: 4px; bottom: 0; height: 2px; background: #76b9ed; }
.t-badge { position: absolute; right: 5px; bottom: 3px; width: 17px; height: 17px; border-radius: 50%; background: #2b2b2b; border: 1px solid #ccc; font: 10px/15px "Open Sans", sans-serif; text-align: center; color: #fff; }
.t-badge.small { right: 0; bottom: 3px; }
.mini { font: bold 6px "Liberation Sans", sans-serif; fill: #fff; text-anchor: middle; }
.mini.big { font-size: 10px; }
.mini.tiny { font-size: 3px; }
.t-tray { margin: 0 15px 0 auto; display: grid; grid-template-columns: 24px 24px 26px 20px 30px 28px 78px 36px; align-items: center; justify-items: center; flex: none; font-size: 11.500px; }
.t-lang { letter-spacing: -.2px; }
.t-clock { display: flex; flex-direction: column; align-items: center; line-height: 20px; letter-spacing: -.2px; padding-top: 1px; white-space: nowrap; }
.t-note { position: relative; width: 36px; height: 40px; display: flex; align-items: center; justify-content: center; }
```
